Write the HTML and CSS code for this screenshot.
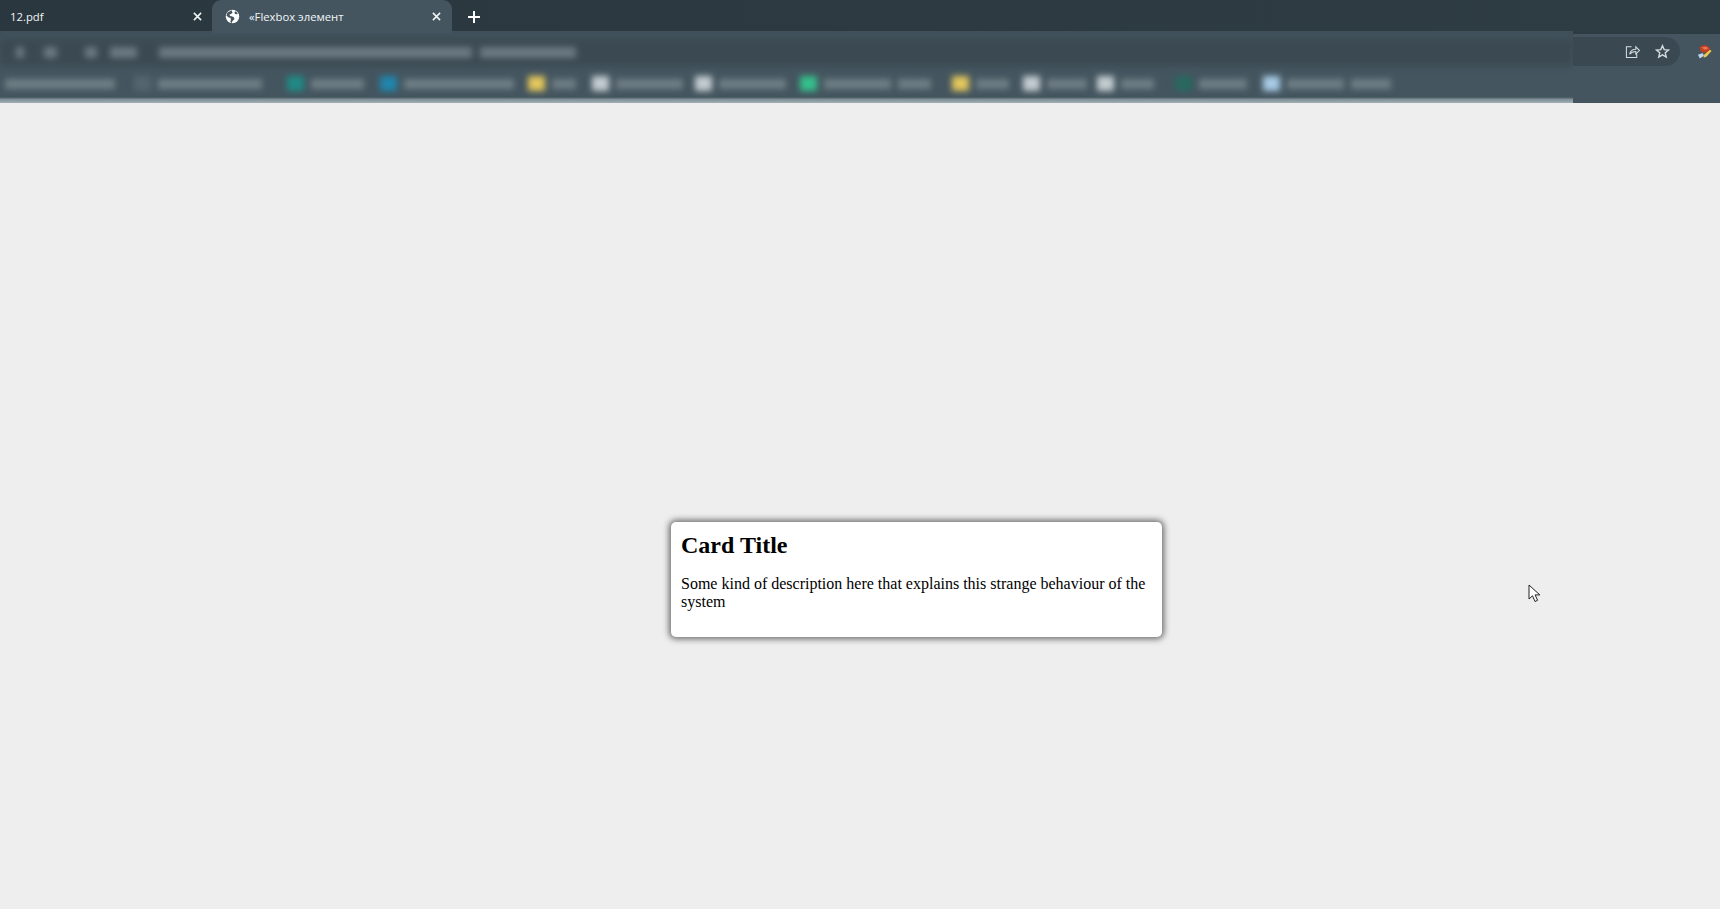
FILE: index.html
```html
<!DOCTYPE html>
<html lang="ru">
<head>
<meta charset="utf-8">
<title>«Flexbox элемент</title>
<link rel="stylesheet" href="styles.css">
</head>
<body>
<header class="chrome">
  <div class="tabstrip">
    <div class="tab">
      <span class="tab-title">12.pdf</span>
      <svg class="tab-close" viewBox="0 0 10 10"><path d="M1 1l8 8M9 1l-8 8"/></svg>
    </div>
    <div class="tab tab-active">
      <svg class="globe" viewBox="0 0 16 16"><circle cx="8" cy="8" r="7.2" fill="#fff"/><path d="M7 1.2 4 3.2 2.6 3.6 1.5 6.8l2.3 2.3 2 .3.5 1.7-.6 2.6 1.4 1.4.9-2.2 2-1.9-.3-2-2.4-1.2-2-.4-.5-1.5 1.6-.7 1.2-.9L8 3.7zM11 2.4l-1 1.6.9 1.3 1.5.4 1.3-.5A6.6 6.6 0 0 0 11 2.4z" fill="#44555f"/></svg>
      <span class="tab-title">«Flexbox элемент</span>
      <svg class="tab-close" viewBox="0 0 10 10"><path d="M1 1l8 8M9 1l-8 8"/></svg>
    </div>
    <svg class="new-tab" viewBox="0 0 12 12"><path d="M6 0v12M0 6h12"/></svg>
  </div>
  <div class="lower">
    <div class="blurred">
      <div class="blur-inner">
        <div class="urlbar">
          <i class="mk w8"></i><i class="mk w13"></i><i class="mk w12"></i><i class="mk w27"></i><i class="mk w313"></i><i class="mk w96"></i>
        </div>
        <div class="bookmarks">
          <div class="bm"><i class="lb w110"></i></div>
          <div class="bm"><i class="ic ic-dim"></i><i class="lb w104"></i></div>
          <div class="bm"><i class="ic ic-teal"></i><i class="lb w53"></i></div>
          <div class="bm"><i class="ic ic-blue"></i><i class="lb w110"></i></div>
          <div class="bm"><i class="ic ic-yellow"></i><i class="lb w24"></i></div>
          <div class="bm"><i class="ic ic-white"></i><i class="lb w67"></i></div>
          <div class="bm"><i class="ic ic-white"></i><i class="lb w67"></i></div>
          <div class="bm"><i class="ic ic-green"></i><i class="lb w67"></i><i class="lb w33"></i></div>
          <div class="bm"><i class="ic ic-yellow"></i><i class="lb w33"></i></div>
          <div class="bm"><i class="ic ic-white"></i><i class="lb w40"></i></div>
          <div class="bm"><i class="ic ic-white"></i><i class="lb w33"></i></div>
          <div class="bm"><i class="ic ic-dark"></i><i class="lb w48"></i></div>
          <div class="bm"><i class="ic ic-sky"></i><i class="lb w57"></i><i class="lb w40"></i></div>
        </div>
      </div>
    </div>
    <div class="clear">
      <div class="omni-end">
        <svg class="share" viewBox="0 0 16 16"><path d="M7 3H1.500v11.500h11V10M5 11c.5-3.500 3-5.500 6.500-5.500V3L15.500 7 11.500 10.500V8C9 8 6.500 9 5 11z"/></svg>
        <svg class="star" viewBox="0 0 16 16"><path d="M8 1.800 9.800 6l4.600.4-3.500 3 1.100 4.500L8 11.500l-4 2.400 1.100-4.500-3.500-3L6.200 6z"/></svg>
      </div>
      <svg class="ext" viewBox="0 0 16 16"><path d="M3 2.500 8 .5l4.500 1.500 1.500 3-2 3.500L7 8.500 3.500 7z" fill="#c2401f"/><path d="M5 3l5-.5 2 2-4 1z" fill="#e8765a"/><path d="M7.500 11 14 5.500l1.500 1.500L10 13l-3 1z" fill="#ecc94b"/><path d="M1 11l5-2 1.500 3L3 15z" fill="#bcd3ee"/></svg>
    </div>
  </div>
</header>
<main class="page">
  <article class="card">
    <h2 class="card-title">Card Title</h2>
    <p class="card-text">Some kind of description here that explains this strange behaviour of the system</p>
  </article>
  <svg class="cursor" viewBox="0 0 13 19"><path d="M1 1v14l3.500-3.200 2.500 5.700 2.600-1.200-2.500-5.400h4.700z"/></svg>
</main>
</body>
</html>
```
FILE: styles.css
```css
* { box-sizing: border-box; }
html, body { margin: 0; height: 100%; }
body {
  width: 1720px;
  height: 909px;
  overflow: hidden;
  display: flex;
  flex-direction: column;
  background: #eeeeee;
  font-family: "Liberation Serif", serif;
}

.chrome { flex: 0 0 103px; display: flex; flex-direction: column; background: #44555f; }

.tabstrip {
  flex: 0 0 31px;
  min-height: 0;
  display: flex;
  align-items: flex-start;
  background: linear-gradient(90deg, #2a373f, #2e3c44);
  position: relative;
  z-index: 1;
}
.tab {
  width: 212px;
  height: 33px;
  display: flex;
  align-items: center;
  padding: 0 10px 0 10px;
  color: #f2f5f6;
  font: 11.3px "Open Sans", sans-serif;
}
.tab-title { flex: 1; white-space: nowrap; }
.tab-close { width: 9px; height: 9px; fill: none; stroke: #f2f5f6; stroke-width: 1.7; }
.tab-active {
  width: 240px;
  padding: 0 11px 0 13px;
  background: #44555f;
  border-radius: 9px 9px 0 0;
}
.globe { width: 15px; height: 15px; margin-right: 9px; }
.new-tab { width: 12px; height: 12px; margin: 11px 0 0 16px; fill: none; stroke: #fff; stroke-width: 2; }

.lower { flex: 1; display: flex; min-height: 0; }
.blurred {
  flex: 0 0 1573px;
  overflow: hidden;
  background: linear-gradient(180deg, #3e4e57 0, #44555f 35px, #44555f 66px, #43535d 90%, #7f9097 95%, #a2b0b5 100%);
}
.blur-inner { height: 100%; filter: blur(3px); }
.urlbar {
  height: 35px;
  padding: 8px 0 0 16px;
  display: grid;
  grid-template-columns: 28px 41px 25px 49px 321px auto;
  align-items: center;
  background: linear-gradient(180deg, #44555f 0, #3b4a52 12px, #3b4a52 100%);
}
.mk { height: 11px; background: #6a7a82; display: block; }
.bookmarks {
  height: 30px;
  padding: 5px 0 0 5px;
  display: grid;
  grid-template-columns: 129px 153px 93px 148px 64px 103px 105px 152px 71px 74px 78px 88px auto;
  align-items: center;
}
.bm { display: flex; align-items: center; gap: 7px; }
.ic { width: 17px; height: 15px; display: block; flex: none; }
.lb { height: 10px; background: #6f7f86; display: block; }
.ic-dim { background: #55656d; }
.ic-teal { background: #1f8a86; }
.ic-blue { background: #1f86ad; }
.ic-yellow { background: #e3c75c; }
.ic-white { background: #c3ccd0; }
.ic-green { background: #35c08c; }
.ic-dark { background: #28695f; }
.ic-sky { background: #a8cbe6; }

.w8 { width: 8px; }
.w12 { width: 12px; }
.w13 { width: 13px; }
.w24 { width: 24px; }
.w27 { width: 27px; }
.w33 { width: 33px; }
.w40 { width: 40px; }
.w48 { width: 48px; }
.w53 { width: 53px; }
.w57 { width: 57px; }
.w67 { width: 67px; }
.w96 { width: 96px; }
.w104 { width: 104px; }
.w110 { width: 110px; }
.w313 { width: 313px; }

.clear {
  flex: 1;
  display: flex;
  align-items: flex-start;
  padding-top: 3px;
  border-top: 3px solid #2d3b43;
  background: #44555f;
}
.omni-end {
  width: 107px;
  height: 29px;
  display: flex;
  align-items: center;
  justify-content: flex-end;
  gap: 15px;
  padding-right: 10px;
  background: #3a4951;
  border-radius: 0 15px 15px 0;
}
.share { width: 15px; height: 15px; fill: none; stroke: #d5dbde; stroke-width: 1.100; }
.star { width: 15px; height: 15px; fill: none; stroke: #d5dbde; stroke-width: 1.500; }
.ext { width: 15px; height: 16px; margin: 7px 0 0 17px; }

.page { flex: 1; position: relative; padding: 419px 0 0 671px; }
.card {
  width: 491px;
  height: 115px;
  padding: 10px;
  background: #ffffff;
  border-radius: 5px;
  box-shadow: 0 0 6px 2px #6a6a6a;
  color: #000;
}
.card-title { margin: 0 0 16px; font-size: 24px; font-weight: bold; }
.card-text { margin: 0; font-size: 16px; }
.cursor {
  position: absolute;
  left: 1528px;
  top: 481px;
  width: 13px;
  height: 19px;
  fill: #fff;
  stroke: #222;
  stroke-width: 1;
}
```
